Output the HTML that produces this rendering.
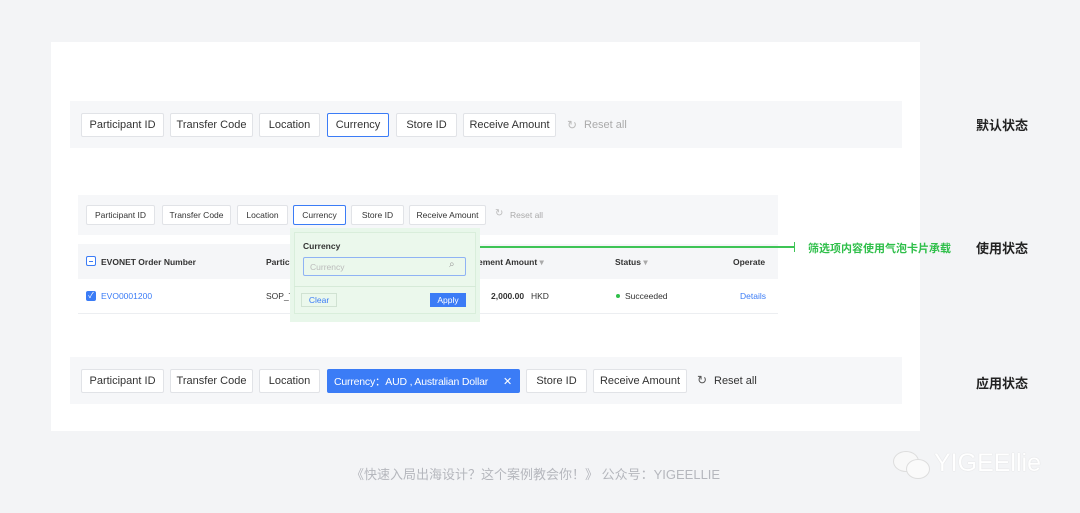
<!DOCTYPE html><html><head><meta charset="utf-8"><style>
*{box-sizing:border-box;margin:0;padding:0}
body{width:1080px;height:513px;background:#f3f4f6;position:relative;overflow:hidden;font-family:"Liberation Sans","Noto Sans CJK SC",sans-serif;color:#333}
.a{position:absolute}
.card{left:51px;top:42px;width:869px;height:389px;background:#fff}
.bar{background:#f6f7f9}
.b{position:absolute;background:#fff;border:1px solid #e1e3e7;border-radius:2px;display:flex;align-items:center;justify-content:center;white-space:nowrap;color:#333}
.l{font-size:11px;height:24px}
.s{font-size:8.5px;height:20px}
.lab{font-size:13px;font-weight:bold;color:#222}
.t{font-size:8.5px;white-space:nowrap}
</style></head><body>
<div class="a card"></div>
<!-- row 1 -->
<div class="a bar" style="left:70px;top:101px;width:832px;height:47px"></div>
<div class="b l" style="left:81px;top:113px;width:83px">Participant ID</div>
<div class="b l" style="left:170px;top:113px;width:83px">Transfer Code</div>
<div class="b l" style="left:259px;top:113px;width:61px">Location</div>
<div class="b l" style="left:327px;top:113px;width:62px;border-color:#3b7cf6">Currency</div>
<div class="b l" style="left:396px;top:113px;width:61px">Store ID</div>
<div class="b l" style="left:463px;top:113px;width:93px">Receive Amount</div>
<div class="a" style="left:567px;top:118px;font-size:12px;color:#bbb">↻</div>
<div class="a" style="left:584px;top:119px;font-size:11px;color:#aaa">Reset all</div>
<div class="a lab" style="left:976px;top:115px">默认状态</div>
<!-- row 2 -->
<div class="a bar" style="left:78px;top:195px;width:700px;height:40px"></div>
<div class="b s" style="left:86px;top:205px;width:69px">Participant ID</div>
<div class="b s" style="left:162px;top:205px;width:69px">Transfer Code</div>
<div class="b s" style="left:237px;top:205px;width:51px">Location</div>
<div class="b s" style="left:293px;top:205px;width:53px;border-color:#3b7cf6">Currency</div>
<div class="b s" style="left:351px;top:205px;width:53px">Store ID</div>
<div class="b s" style="left:409px;top:205px;width:77px">Receive Amount</div>
<div class="a" style="left:495px;top:208px;font-size:10px;color:#bbb">↻</div>
<div class="a t" style="left:510px;top:210px;color:#aaa">Reset all</div>
<div class="a bar" style="left:78px;top:244px;width:700px;height:35px;background:#f5f6f8"></div>
<div class="a" style="left:78px;top:313px;width:700px;height:1px;background:#eceef1"></div>
<div class="a" style="left:86px;top:256px;width:10px;height:10px;border:1px solid #3b7cf6;border-radius:2px;background:#fff"><div style="margin:3.5px 2px;height:1px;background:#3b7cf6"></div></div>
<div class="a t" style="left:101px;top:257px;font-weight:bold">EVONET Order Number</div>
<div class="a t" style="left:266px;top:257px;font-weight:bold">Partici</div>
<div class="a t" style="left:478px;top:257px;font-weight:bold">ement Amount <span style="color:#aaa">▾</span></div>
<div class="a t" style="left:615px;top:257px;font-weight:bold">Status <span style="color:#aaa">▾</span></div>
<div class="a t" style="left:733px;top:257px;font-weight:bold">Operate</div>
<div class="a" style="left:86px;top:291px;width:10px;height:10px;background:#3b7cf6;border-radius:2px;color:#fff;font-size:8px;line-height:10px;text-align:center">✓</div>
<div class="a t" style="left:101px;top:291px;color:#3b7cf6">EVO0001200</div>
<div class="a t" style="left:266px;top:291px">SOP_Te</div>
<div class="a t" style="left:491px;top:291px;font-weight:bold">2,000.00</div>
<div class="a t" style="left:531px;top:291px">HKD</div>
<div class="a" style="left:616px;top:294px;width:4px;height:4px;border-radius:50%;background:#2fbf4a"></div>
<div class="a t" style="left:625px;top:291px">Succeeded</div>
<div class="a t" style="left:740px;top:291px;color:#3b7cf6">Details</div>
<!-- popup -->
<div class="a" style="left:290px;top:228px;width:190px;height:94px;background:#e8f7ea"></div>
<div class="a" style="left:294px;top:232px;width:182px;height:82px;background:#ebf8ec;border:1px solid #d9eedb"></div>
<div class="a" style="left:294px;top:286px;width:182px;height:1px;background:#d6ead8"></div>
<div class="a t" style="left:303px;top:241px;font-weight:bold;color:#333">Currency</div>
<div class="a" style="left:303px;top:257px;width:163px;height:19px;border:1px solid #8fb3f4;border-radius:2px"></div>
<div class="a t" style="left:310px;top:262px;color:#bbb">Currency</div>
<div class="a" style="left:449px;top:259px;font-size:10px;color:#999">⌕</div>
<div class="a t" style="left:301px;top:293px;width:36px;height:14px;border:1px solid #d0e2d2;text-align:center;line-height:12px;color:#3b7cf6">Clear</div>
<div class="a t" style="left:430px;top:293px;width:36px;height:14px;background:#3b7cf6;text-align:center;line-height:14px;color:#fff">Apply</div>
<div class="a" style="left:480px;top:246px;width:315px;height:2px;background:#3ec455"></div>
<div class="a" style="left:794px;top:242px;width:1px;height:10px;background:#3ec455"></div>
<div class="a" style="left:808px;top:240px;font-size:11px;color:#2fbf4a;font-weight:bold">筛选项内容使用气泡卡片承载</div>
<div class="a lab" style="left:976px;top:238px">使用状态</div>
<!-- row 3 -->
<div class="a bar" style="left:70px;top:357px;width:832px;height:47px"></div>
<div class="b l" style="left:81px;top:369px;width:83px">Participant ID</div>
<div class="b l" style="left:170px;top:369px;width:83px">Transfer Code</div>
<div class="b l" style="left:259px;top:369px;width:61px">Location</div>
<div class="b l" style="left:327px;top:369px;width:193px;background:#3b7cf6;border-color:#3b7cf6;color:#fff;justify-content:flex-start;padding-left:6px;font-size:10.5px;letter-spacing:-0.2px">Currency：AUD , Australian Dollar<span style="position:absolute;left:175px;font-size:11px">✕</span></div>
<div class="b l" style="left:526px;top:369px;width:61px">Store ID</div>
<div class="b l" style="left:593px;top:369px;width:94px">Receive Amount</div>
<div class="a" style="left:697px;top:373px;font-size:12px;color:#555">↻</div>
<div class="a" style="left:714px;top:375px;font-size:11px;color:#333">Reset all</div>
<div class="a lab" style="left:976px;top:373px">应用状态</div>
<!-- footer -->
<div class="a" style="left:351px;top:464px;font-size:13px;color:#b5b7bd;white-space:nowrap">《快速入局出海设计？这个案例教会你！》 公众号：YIGEELLIE</div>
<div class="a" style="left:893px;top:451px;width:26px;height:21px;border:1.5px solid #ddd;border-radius:50%;background:#f8f8f8"></div>
<div class="a" style="left:906px;top:459px;width:24px;height:20px;border:1.5px solid #ddd;border-radius:50%;background:#fafafa"></div>
<div class="a" style="left:934px;top:449px;font-size:25px;color:#fff;text-shadow:0 0 1px #ccc;white-space:nowrap">YIGEEllie</div>
</body></html>
